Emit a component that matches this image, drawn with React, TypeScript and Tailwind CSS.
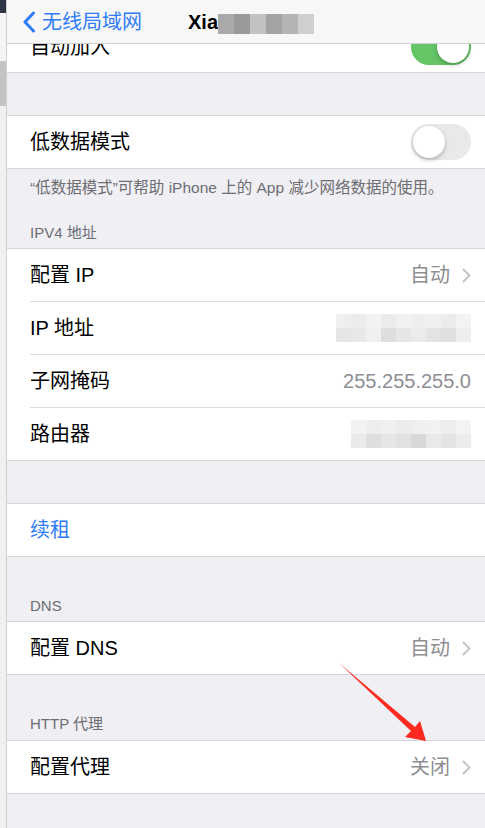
import React from 'react';

const font = { fontFamily: '"Liberation Sans", "Noto Sans CJK SC", sans-serif' };

const Chevron = () => (
  <svg width="9" height="15" viewBox="0 0 9 15" className="ml-[12px]">
    <path d="M1.5 1.5l6 6-6 6" fill="none" stroke="#c4c4c8" strokeWidth="2" strokeLinecap="round" strokeLinejoin="round" />
  </svg>
);

const Toggle = ({ on }: { on: boolean }) => (
  <div
    className={`relative w-[60px] h-[36px] rounded-full ${on ? 'bg-[#65c466]' : 'bg-[#e9e9eb]'}`}
  >
    <div
      className={`absolute top-[2px] w-[32px] h-[32px] rounded-full bg-white shadow-[0_2px_4px_rgba(0,0,0,0.25)] ${on ? 'right-[2px]' : 'left-[2px]'}`}
    />
  </div>
);

const Mosaic = ({ cells }: { cells: string[][] }) => (
  <div className="flex flex-col">
    {cells.map((row, i) => (
      <div key={i} className="flex">
        {row.map((c, j) => (
          <div key={j} className="w-[15px] h-[14px]" style={{ background: c }} />
        ))}
      </div>
    ))}
  </div>
);

const Row = ({
  label,
  value,
  chevron,
  blue,
  toggle,
  children,
  sep,
  tall,
}: {
  label: string;
  value?: string;
  chevron?: boolean;
  blue?: boolean;
  toggle?: boolean;
  children?: React.ReactNode;
  sep?: boolean;
  tall?: boolean;
}) => (
  <div className="pl-[23px] bg-white">
    <div
      className={`${tall ? 'h-[53px]' : 'h-[52px]'} flex items-center pr-[14px] ${sep ? 'border-b border-[#dcdce0]' : ''}`}
    >
      <span className={`text-[20px] ${blue ? 'text-[#2f7cf6]' : 'text-black'}`}>{label}</span>
      <div className="flex-1" />
      {value && <span className="text-[20px] text-[#8e8e93]">{value}</span>}
      {chevron && <Chevron />}
      {toggle !== undefined && <Toggle on={toggle} />}
      {children}
    </div>
  </div>
);

const Header = ({ text, className }: { text: string; className: string }) => (
  <div className={`px-[23px] text-[15px] text-[#6d6d72] ${className}`}>{text}</div>
);

export default function App() {
  return (
    <div className="relative w-[485px] h-[828px] overflow-hidden flex bg-[#e9e9ec]" style={font}>
      {/* background page peeking on the left */}
      <div className="w-[7px] flex flex-col bg-[#ebebeb] border-r border-[#cfcfcf]">
        <div className="h-[13px] bg-[#2c3446]" />
        <div className="h-[48px] bg-[#f4f4f4]" />
        <div className="h-[45px] bg-[#c4c4c4]" />
        <div className="flex-1 bg-[#f0f0f0]" />
      </div>

      <div className="flex-1 flex flex-col bg-[#efeff4]">
        {/* nav bar */}
        <div className="h-[44px] shrink-0 bg-[#f7f7f8] border-b border-[#d0d0d4] flex items-center">
          <svg width="14" height="22" viewBox="0 0 14 22" className="ml-[15px]">
            <path d="M11.5 2L3 11l8.5 9" fill="none" stroke="#2f7cf6" strokeWidth="3" strokeLinecap="round" strokeLinejoin="round" />
          </svg>
          <span className="ml-[6px] text-[20px] text-[#2f7cf6]">无线局域网</span>
          <span className="ml-[46px] text-[20px] font-bold text-black">Xia</span>
          <div className="flex h-[20px] mt-[4px]">
            {['#a9a9a9', '#9a9a9a', '#c2c2c2', '#a3a3a3', '#b4b4b4', '#cfcfcf'].map((c, i) => (
              <div key={i} className="w-[16px]" style={{ background: c }} />
            ))}
          </div>
        </div>

        {/* 自动加入 partly hidden under nav */}
        <div className="h-[29px] overflow-hidden bg-white border-b border-[#d6d6da] shrink-0">
          <div className="-mt-[24px] pl-[23px] pr-[14px] h-[53px] flex items-center">
            <span className="text-[20px] text-black">自动加入</span>
            <div className="flex-1" />
            <Toggle on={true} />
          </div>
        </div>

        <div className="h-[42px] shrink-0" />

        <div className="border-y border-[#d6d6da]">
          <Row label="低数据模式" toggle={false} />
        </div>

        <div className="h-[79px] shrink-0 flex flex-col">
          <div className="px-[23px] pt-[7px] text-[15.5px] text-[#6d6d72] whitespace-nowrap">
            “低数据模式”可帮助 iPhone 上的 App 减少网络数据的使用。
          </div>
          <div className="flex-1" />
          <Header text="IPV4 地址" className="pb-[4px]" />
        </div>

        <div className="border-y border-[#d6d6da]">
          <Row label="配置 IP" value="自动" chevron sep tall />
          <Row label="IP 地址" sep tall>
            <Mosaic
              cells={[
                ['#efefef', '#ececec', '#f2f2f2', '#ebebeb', '#f1f1f1', '#eeeeee', '#f0f0f0', '#ececec', '#f3f3f3'],
                ['#e5e5e5', '#e8e8e8', '#f0f0f0', '#dedede', '#e6e6e6', '#ebebeb', '#e3e3e3', '#e0e0e0', '#ededed'],
              ]}
            />
          </Row>
          <Row label="子网掩码" value="255.255.255.0" sep tall />
          <Row label="路由器">
            <Mosaic
              cells={[
                ['#f2f2f2', '#eeeeee', '#f0f0f0', '#ececec', '#efefef', '#f1f1f1', '#eeeeee', '#f3f3f3'],
                ['#eaeaea', '#dedede', '#e6e6e6', '#e1e1e1', '#d8d8d8', '#e9e9e9', '#e4e4e4', '#ececec'],
              ]}
            />
          </Row>
        </div>

        <div className="h-[42px] shrink-0" />

        <div className="border-y border-[#d6d6da]">
          <Row label="续租" blue />
        </div>

        <div className="h-[64px] shrink-0 flex flex-col justify-end">
          <Header text="DNS" className="pb-[4px]" />
        </div>

        <div className="border-y border-[#d6d6da]">
          <Row label="配置 DNS" value="自动" chevron />
        </div>

        <div className="h-[65px] shrink-0 flex flex-col justify-end">
          <Header text="HTTP 代理" className="pb-[5px]" />
        </div>

        <div className="border-y border-[#d6d6da]">
          <Row label="配置代理" value="关闭" chevron />
        </div>

        <div className="flex-1" />
      </div>

      {/* red annotation arrow */}
      <svg className="absolute left-0 top-0 pointer-events-none" width="485" height="828">
        <polygon
          points="339,663 415,727 420,721 426,741 405,737 411,731"
          fill="#ff2a1f"
        />
      </svg>
    </div>
  );
}
